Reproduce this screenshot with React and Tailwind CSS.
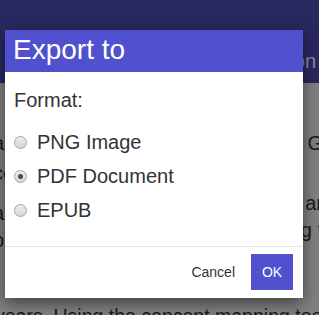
import React from "react";

const font = { fontFamily: '"Liberation Sans", Arial, sans-serif' };

function Radio({ checked }) {
  return (
    <span className="flex h-[13px] w-[13px] shrink-0 items-center justify-center rounded-full border border-[#a6a6a6] bg-gradient-to-b from-[#ececec] to-[#d6d6d6]">
      {checked && <span className="h-[5px] w-[5px] rounded-full bg-[#4a4a4a]" />}
    </span>
  );
}

function BgRow({ h, left, right }) {
  return (
    <div className={`flex justify-between ${h}`}>
      <span className="ml-[-7px] h-[20px] whitespace-nowrap leading-[20px]">{left}</span>
      <span className="mr-[-4px] h-[20px] whitespace-nowrap leading-[20px]">{right}</span>
    </div>
  );
}

export default function App() {
  const options = [
    { label: "PNG Image", checked: false },
    { label: "PDF Document", checked: true },
    { label: "EPUB", checked: false },
  ];
  return (
    <div
      className="relative h-[315px] w-[319px] overflow-hidden bg-[#808080] text-[20px] text-[#1a1a1a]"
      style={font}
    >
      {/* background page (behind backdrop) */}
      <div className="flex h-[83px] justify-end bg-[#29285f] pr-[3px] pt-[50px]">
        <span className="h-[23px] leading-[23px] text-[#8b8aa5]">Application</span>
      </div>
      <div className="h-[50px]" />
      <BgRow h="h-[30px]" left="area" right="G" />
      <BgRow h="h-[30px]" left="co" right="" />
      <BgRow h="h-[10px]" left="" right="ar" />
      <BgRow h="h-[17px]" left="a" right="" />
      <BgRow h="h-[10px]" left="" right="g t" />
      <BgRow h="h-[75px]" left="o" right="" />
      <div className="ml-[-5px] h-[23px] whitespace-nowrap text-[19.5px] leading-[23px]">
        years. Using the concept mapping tool
      </div>

      {/* modal */}
      <div className="absolute left-[5px] top-[30px] flex h-[268px] w-[298px] flex-col bg-white shadow-[0_5px_15px_rgba(0,0,0,0.5)]">
        <div className="h-[42px] bg-[#5150cf] pl-[8px] pt-[4px] text-[28px] leading-[32px] text-white">
          Export to
        </div>
        <div className="flex flex-col pb-[19px] pl-[9px] pt-[17px] text-[#333333]">
          <div className="h-[23px] leading-[23px]">Format:</div>
          <div className="mt-[13px] flex flex-col">
            {options.map((o) => (
              <label key={o.label} className="flex h-[34px] items-center gap-[10px]">
                <Radio checked={o.checked} />
                <span className="leading-[23px]">{o.label}</span>
              </label>
            ))}
          </div>
        </div>
        <div className="h-px bg-[#e5e5e5]" />
        <div className="flex items-start justify-end gap-[5px] pr-[10px] pt-[7px] text-[14px]">
          <button className="h-[36px] px-[11px] text-[#333333]">Cancel</button>
          <button className="h-[36px] w-[42px] bg-[#5150cf] text-white">OK</button>
        </div>
      </div>
    </div>
  );
}
